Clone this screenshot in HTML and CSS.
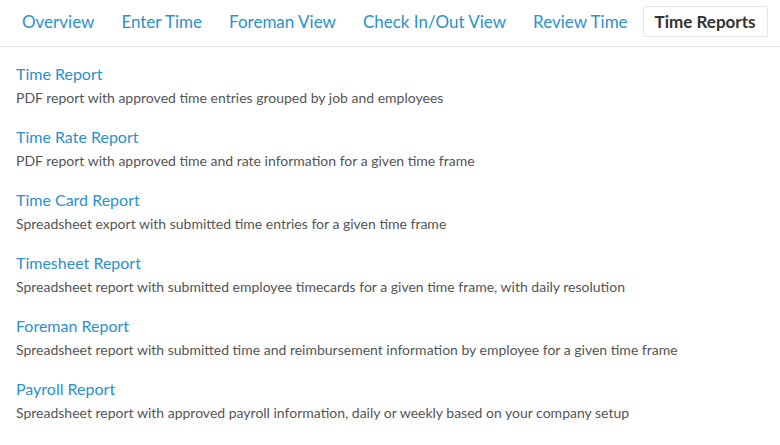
FILE: index.html
```html
<!DOCTYPE html>
<html lang="en">
<head>
    <meta charset="UTF-8">
    <title>Time Reports</title>
    <link rel="stylesheet" href="styles.css">
</head>
<body>
    <ul class="tabs">
        <li><a href="#">Overview</a></li>
        <li><a href="#">Enter Time</a></li>
        <li><a href="#">Foreman View</a></li>
        <li><a href="#">Check In/Out View</a></li>
        <li><a href="#">Review Time</a></li>
        <li class="active"><a href="#">Time Reports</a></li>
    </ul>
    <div class="reports">
        <div class="report">
            <a href="#">Time Report</a>
            <p>PDF report with approved time entries grouped by job and employees</p>
        </div>
        <div class="report">
            <a href="#">Time Rate Report</a>
            <p>PDF report with approved time and rate information for a given time frame</p>
        </div>
        <div class="report">
            <a href="#">Time Card Report</a>
            <p>Spreadsheet export with submitted time entries for a given time frame</p>
        </div>
        <div class="report">
            <a href="#">Timesheet Report</a>
            <p>Spreadsheet report with submitted employee timecards for a given time frame, with daily resolution</p>
        </div>
        <div class="report">
            <a href="#">Foreman Report</a>
            <p>Spreadsheet report with submitted time and reimbursement information by employee for a given time frame</p>
        </div>
        <div class="report">
            <a href="#">Payroll Report</a>
            <p>Spreadsheet report with approved payroll information, daily or weekly based on your company setup</p>
        </div>
    </div>
</body>
</html>
```

FILE: styles.css
```css
body {
    font-family: "Lato", "Open Sans", sans-serif;
    background: #ffffff;
    color: #555555;
    margin: 0;
    padding: 0;
}
a {
    color: #2b91cb;
    text-decoration: none;
}
.tabs {
    list-style: none;
    margin: 0;
    padding: 6px 10px 9px;
    display: flex;
    gap: 3px;
    border-bottom: 1px solid #e8e8e8;
}
.tabs li a {
    display: block;
    padding: 4px 11px;
    font-size: 17px;
    line-height: 21px;
    border: 1px solid transparent;
    border-radius: 2px;
}
.tabs li.active a {
    color: #333333;
    font-weight: 700;
    border-color: #e6e6e6;
}
.reports {
    padding: 17px 16px;
}
.report {
    margin-bottom: 20px;
}
.report a {
    display: block;
    font-size: 16px;
    line-height: 20px;
}
.report p {
    margin: 5px 0 0;
    font-size: 14px;
    line-height: 18px;
}
```
